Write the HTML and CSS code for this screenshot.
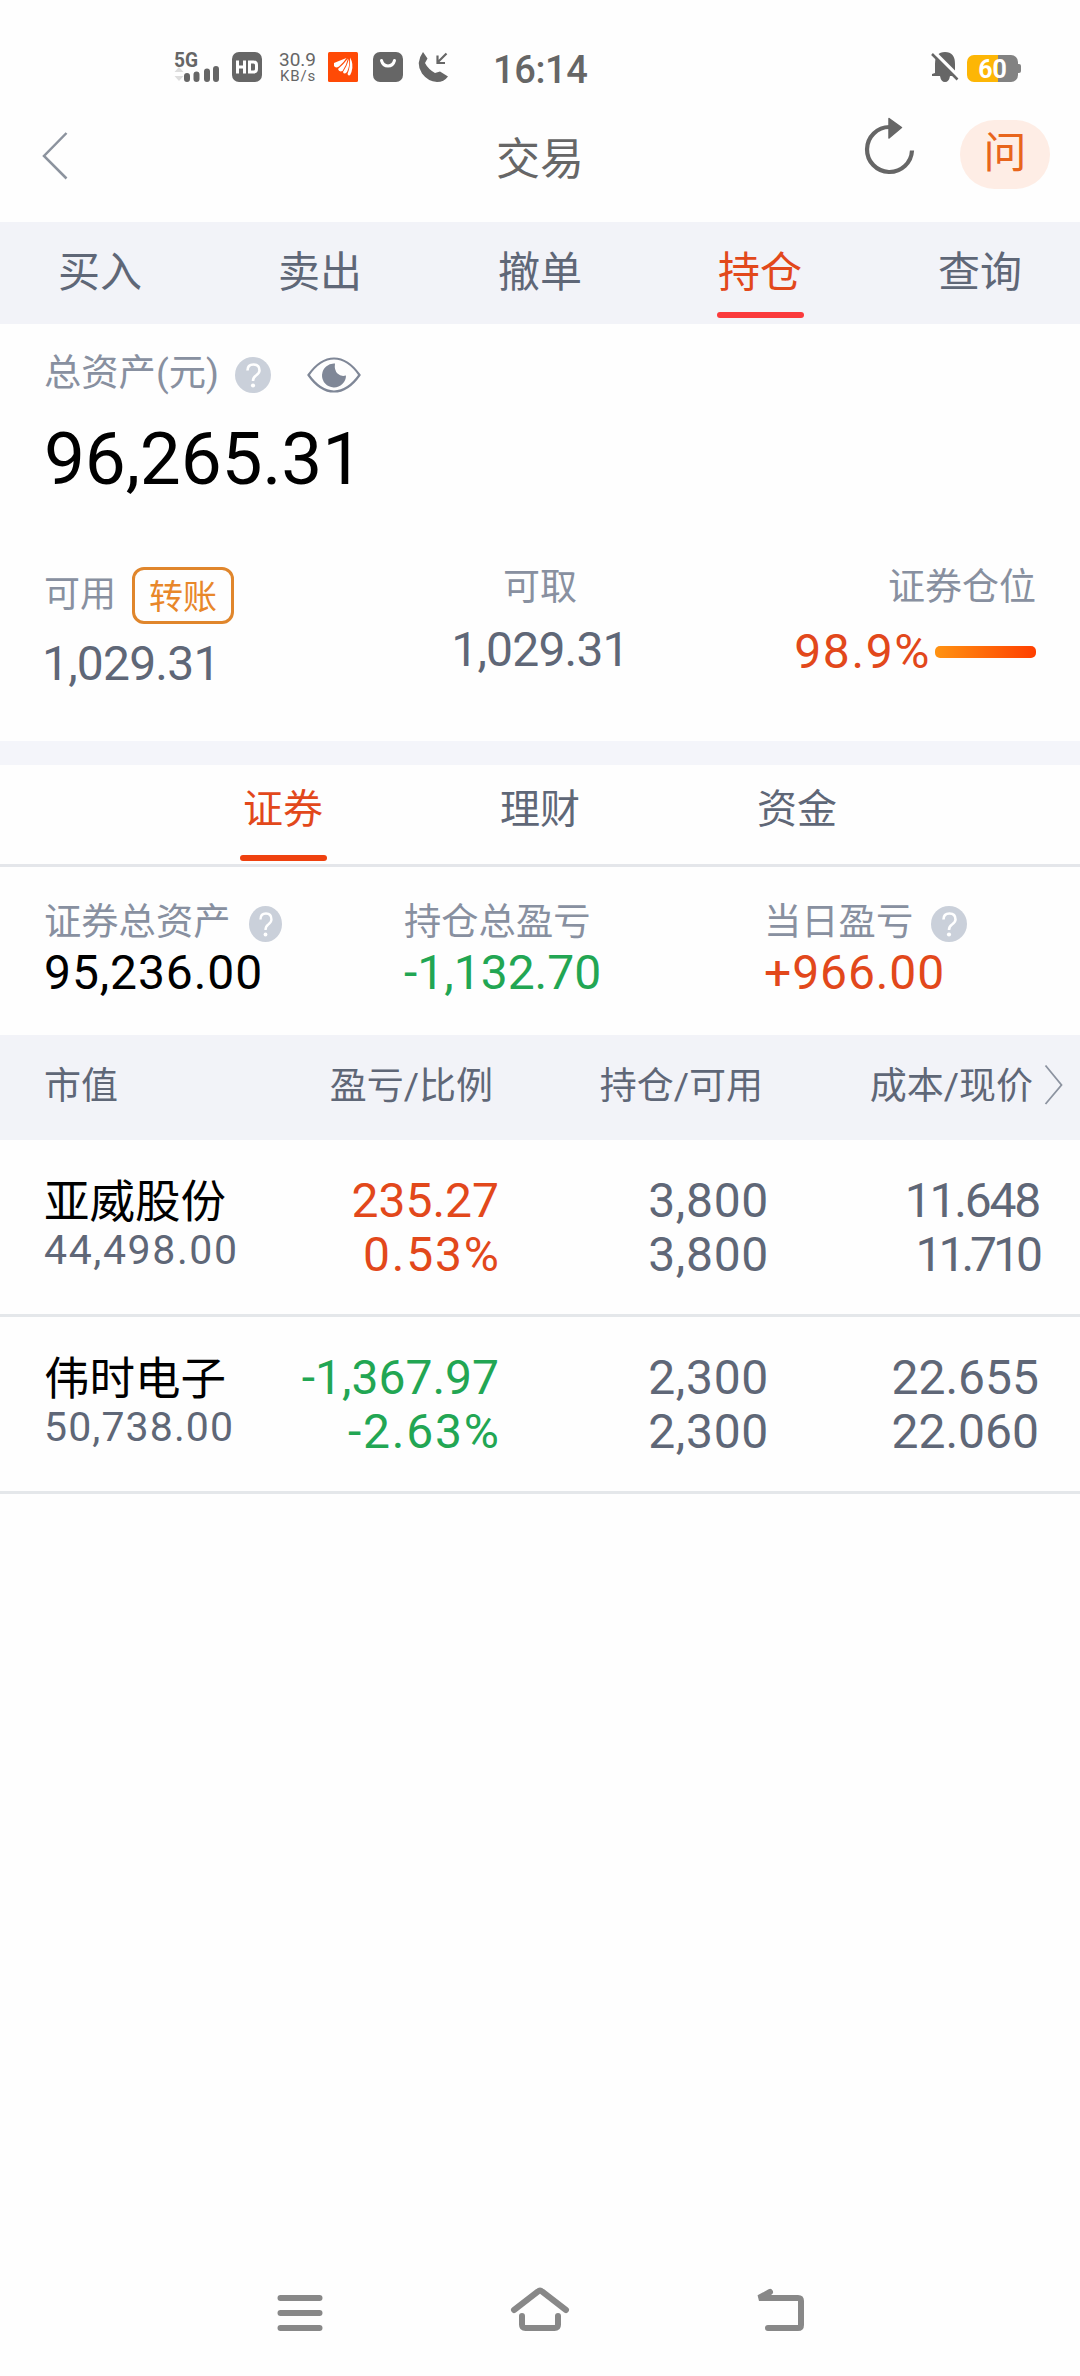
FILE: index.html
```html
<!DOCTYPE html>
<html lang="zh-CN">
<head>
    <meta charset="UTF-8">
    <meta name="viewport" content="width=device-width, initial-scale=1.0">
    <title>交易</title>
    <link rel="stylesheet" href="styles.css">
</head>
<body>
    <div class="status">
        <svg class="signal" width="46" height="32" viewBox="0 0 46 32">
            <text x="0" y="15.500" class="g5" textLength="24" lengthAdjust="spacingAndGlyphs">5G</text>
            <path d="M5 16l4.500 5h-9zM5 30l4.500-5h-9z" fill="#ddd"/>
            <path d="M13 25v3M22.500 23.500v4.500M33 20.500v7.500M42 18v10" stroke="#666" stroke-width="6" stroke-linecap="round"/>
        </svg>
        <svg class="hd" width="30" height="30" viewBox="0 0 30 30">
            <rect width="30" height="30" rx="7" fill="#666"/>
            <path d="M5.500 8.500v13M12.500 8.500v13M5.500 15h7M17.500 10h4q3 0 3 3v4q0 3-3 3h-4z" fill="none" stroke="#fff" stroke-width="3"/>
        </svg>
        <div class="speed"><span>30.9</span><span class="kb">KB/s</span></div>
        <svg class="app" width="30" height="30" viewBox="0 0 30 30">
            <rect width="30" height="30" rx="1.500" fill="#ff4a06"/>
            <path d="M6 11Q12 8.500 18.500 6Q16 10 11 14.500Q7.500 16.500 6 14zM10 17Q15 13 20 6.500Q18.500 13 14.500 19Q11 20.500 10 17zM15 20Q19 14 21 7Q22 14 19 20Q16 23 15 20zM19.500 22Q22.500 15 22 5.500Q26 12 23.500 20Q21.500 26 19.500 22z" fill="#fff"/>
        </svg>
        <svg class="bag" width="30" height="30" viewBox="0 0 30 30">
            <rect width="30" height="30" rx="7" fill="#666"/>
            <path d="M8.500 8.500Q10 14 15 14T21.500 8.500" fill="none" stroke="#fff" stroke-width="3" stroke-linecap="round"/>
        </svg>
        <svg class="call" width="30" height="30" viewBox="0 0 30 30">
            <path d="M5 0L9.500 6.500 7 11Q10 17 17 21L22 19.500 30 24.500Q26 30 19 30Q10 29.500 4 21.500Q-3 11 5 0z" fill="#666"/>
            <path d="M28.500 1.500L19.500 10.500M19.500 3.500v7.500H27" fill="none" stroke="#666" stroke-width="2.200"/>
        </svg>
        <div class="time">16:14</div>
        <svg class="bell" width="28" height="30" viewBox="0 0 28 30">
            <path d="M4 21V12Q4 0 14 0T24 12V21L25.500 24H19Q18 30 14 30T9 24H1V22z" fill="#666"/>
            <path d="M2 -1L28 25" stroke="#fff" stroke-width="3.500"/>
            <path d="M1 2L26.500 27.500" stroke="#666" stroke-width="2.500"/>
        </svg>
        <div class="battery">
            <div class="level">60</div>
        </div>
    </div>

    <div class="header">
        <svg class="back" width="28" height="48" viewBox="0 0 28 48">
            <path d="M25.500 1L3 24L25.500 46.500" fill="none" stroke="#8c939e" stroke-width="2.500"/>
        </svg>
        <div class="title">交易</div>
        <div class="actions">
            <svg class="refresh" width="52" height="60" viewBox="0 0 52 60">
                <path d="M48 33.500A22.500 22.500 0 1 1 25.500 10" fill="none" stroke="#666" stroke-width="4.200"/>
                <path d="M25 1.500L37.500 10.500 25 21z" fill="#666" stroke="#666" stroke-width="1.500" stroke-linejoin="round"/>
            </svg>
            <div class="ask">问</div>
        </div>
    </div>

    <div class="menu">
        <div>买入</div>
        <div>卖出</div>
        <div>撤单</div>
        <div class="ativo">持仓</div>
        <div>查询</div>
    </div>

    <div class="assets">
        <div class="label">
            总资产(元)
            <svg class="help" width="36" height="36" viewBox="0 0 36 36">
                <circle cx="18" cy="18" r="18" fill="#cad0da"/>
                <path d="M12.500 13.500Q12.500 7.500 18.500 7.500T24.500 13.500Q24.500 16 21 18.500Q18 20.500 18 24" fill="none" stroke="#fff" stroke-width="2.600"/>
                <circle cx="18" cy="28.500" r="2.100" fill="#fff"/>
            </svg>
            <svg class="eye" width="54" height="36" viewBox="0 0 54 36">
                <path d="M1.500 18C17 -4 37 -4 52.500 18C37 40 17 40 1.500 18z" fill="none" stroke="#7f8797" stroke-width="2.200"/>
                <path d="M28 6.500A12 12 0 1 0 39 18.500Q34 20 30.500 16.500T28 6.500z" fill="#7f8797"/>
            </svg>
        </div>
        <div class="total">96,265.31</div>
        <div class="cols">
            <div class="esq">
                <div class="avail">可用 <span class="transfer">转账</span></div>
                <div class="num">1,029.31</div>
            </div>
            <div class="meio">
                <div class="lab">可取</div>
                <div class="num">1,029.31</div>
            </div>
            <div class="dir">
                <div class="lab">证券仓位</div>
                <div class="ratio">98.9%<div class="bar"></div></div>
            </div>
        </div>
    </div>

    <div class="subtabs">
        <div class="ativo">证券</div>
        <div>理财</div>
        <div>资金</div>
    </div>

    <div class="summary">
        <div>
            <div class="label">
                证券总资产
                <svg class="help narrow" width="33" height="36" viewBox="0 0 36 36" preserveAspectRatio="none">
                    <circle cx="18" cy="18" r="18" fill="#cad0da"/>
                    <path d="M12.500 13.500Q12.500 7.500 18.500 7.500T24.500 13.500Q24.500 16 21 18.500Q18 20.500 18 24" fill="none" stroke="#fff" stroke-width="2.600"/>
                    <circle cx="18" cy="28.500" r="2.100" fill="#fff"/>
                </svg>
            </div>
            <div class="val">95,236.00</div>
        </div>
        <div>
            <div class="label">持仓总盈亏</div>
            <div class="val green">-1,132.70</div>
        </div>
        <div>
            <div class="label">
                当日盈亏
                <svg class="help" width="36" height="36" viewBox="0 0 36 36">
                    <circle cx="18" cy="18" r="18" fill="#cad0da"/>
                    <path d="M12.500 13.500Q12.500 7.500 18.500 7.500T24.500 13.500Q24.500 16 21 18.500Q18 20.500 18 24" fill="none" stroke="#fff" stroke-width="2.600"/>
                    <circle cx="18" cy="28.500" r="2.100" fill="#fff"/>
                </svg>
            </div>
            <div class="val red">+966.00</div>
        </div>
    </div>

    <div class="thead">
        <div>市值</div>
        <div>盈亏/比例</div>
        <div>持仓/可用</div>
        <div>成本/现价</div>
        <svg width="20" height="42" viewBox="0 0 20 42">
            <path d="M1.500 1.500L17.500 21L1.500 40" fill="none" stroke="#8c93a0" stroke-width="1.800"/>
        </svg>
    </div>
    <div class="row">
        <div>
            <div class="name">亚威股份</div>
            <div class="market">44,498.00</div>
        </div>
        <div class="red">235.27<br><span class="pct">0.53%</span></div>
        <div class="qty">3,800<br>3,800</div>
        <div class="tight">11.648<br><span class="tighter">11.710</span></div>
    </div>
    <div class="row">
        <div>
            <div class="name">伟时电子</div>
            <div class="market second">50,738.00</div>
        </div>
        <div class="green">-1,367.97<br><span class="pct">-2.63%</span></div>
        <div class="qty">2,300<br>2,300</div>
        <div>22.655<br>22.060</div>
    </div>

    <div class="bottom">
        <svg width="60" height="60" viewBox="0 0 60 60">
            <path d="M10.500 18h39M10.500 33h39M10.500 48h39"/>
        </svg>
        <svg width="60" height="60" viewBox="0 0 60 60">
            <path d="M4 30L28 11.500Q30 9.500 32 11.500L56 30M12 36v8.500Q12 48 15.500 48h29Q48 48 48 44.500V36"/>
        </svg>
        <svg width="60" height="60" viewBox="0 0 60 60">
            <path d="M20 12L9 18H48Q51 18 51 21V45Q51 48 48 48H18"/>
        </svg>
    </div>
</body>
</html>
```
FILE: styles.css
```css
*{
    box-sizing: border-box;
}

body{
    margin: 0;
    width: 1080px;
    height: 2376px;
    display: flex;
    flex-direction: column;
    background-color: #fefefe;
    color: #5f6777;
    font-family: Roboto, 'Noto Sans CJK SC', sans-serif;
}

svg{
    display: block;
    flex: none;
    overflow: visible;
}

.red{
    color: #e2481b;
}

.green{
    color: #22a653;
}

/* barra de status */
.status{
    display: flex;
    align-items: center;
    height: 44px;
    margin-top: 45px;
    padding-left: 174px;
    color: #666;
}

.g5{
    font-size: 20px;
    font-weight: 700;
    fill: #666;
}

.hd{
    margin-left: 12px;
}

.speed{
    width: 40px;
    margin-left: 14px;
    font-size: 19px;
    line-height: 19px;
    text-align: right;
}

.speed span{
    display: block;
}

.speed .kb{
    font-size: 15px;
    line-height: 15px;
    letter-spacing: 0.8px;
}

.app{
    margin-left: 12px;
}

.bag, .call{
    margin-left: 15px;
}

.time{
    width: 96px;
    margin: 5px 0 0 45px;
    font-size: 38px;
    font-weight: 500;
    line-height: 40px;
    letter-spacing: -0.4px;
}

.bell{
    margin-left: 342px;
}

.battery{
    position: relative;
    width: 51px;
    height: 27px;
    margin: 3px 0 0 8px;
    border-radius: 7px;
    background: linear-gradient(to right, #fdb605 31px, #828282 31px);
}

.battery::after{
    content: '';
    position: absolute;
    right: -3px;
    top: 9px;
    width: 3px;
    height: 9px;
    border-radius: 0 2px 2px 0;
    background-color: #828282;
}

.level{
    color: white;
    font-size: 25px;
    font-weight: 700;
    line-height: 29px;
    text-align: center;
}

/* topo */
.header{
    display: grid;
    grid-template-columns: 1fr auto 1fr;
    height: 133px;
    padding: 0 30px 0 41px;
}

.back{
    margin-top: 43px;
}

.title{
    margin: 41px 0 0 -11px;
    font-size: 44px;
    line-height: 60px;
    color: #666;
}

.actions{
    display: flex;
    justify-content: flex-end;
}

.refresh{
    margin: 28px 44px 0 0;
}

.ask{
    width: 90px;
    height: 69px;
    margin-top: 31px;
    border-radius: 35px;
    background-color: #feede5;
    color: #e8651c;
    font-size: 43px;
    line-height: 67px;
    text-align: center;
}

.menu{
    display: flex;
    justify-content: space-between;
    height: 102px;
    padding: 0 58px;
    background-color: #f2f3f8;
    font-size: 42px;
    line-height: 101px;
}

.menu .ativo{
    position: relative;
    color: #e2481b;
}

.menu .ativo::after{
    content: '';
    position: absolute;
    left: -1px;
    bottom: 6px;
    width: 87px;
    height: 6px;
    border-radius: 3px;
    background-color: #fb3a3c;
}

/* patrimonio */
.assets{
    height: 417px;
    padding: 24px 44px 0;
}

.label{
    display: flex;
    align-items: center;
    height: 50px;
    font-size: 37.300px;
    line-height: 50px;
    color: #8890a0;
}

.help{
    margin: 4px 0 0 16px;
}

.eye{
    margin: 3px 0 0 36px;
}

.total{
    margin-top: 21px;
    font-size: 73px;
    line-height: 80px;
    letter-spacing: -0.200px;
    color: black;
}

.cols{
    display: grid;
    grid-template-columns: 1fr 1fr 1fr;
    margin-top: 60px;
}

.avail{
    display: flex;
    align-items: center;
    height: 72px;
    font-size: 36px;
    line-height: 72px;
    color: #8890a0;
}

.transfer{
    width: 102px;
    height: 57px;
    margin-left: 16px;
    border: 3px solid #e0862c;
    border-radius: 12px;
    color: #e8872a;
    font-size: 34px;
    line-height: 54px;
    text-align: center;
}

.num, .ratio{
    font-size: 48px;
    line-height: 60px;
}

.num{
    letter-spacing: -0.800px;
}

.lab{
    margin-top: 2px;
    font-size: 37px;
    line-height: 54px;
    color: #8890a0;
}

.esq .num{
    margin: 3px 0 0 -2px;
}

.meio{
    text-align: center;
}

.meio .num{
    margin-top: 5px;
}

.dir{
    text-align: right;
}

.ratio{
    display: flex;
    align-items: center;
    justify-content: flex-end;
    margin-top: 7px;
    letter-spacing: 1.600px;
    color: #e2481b;
}

.bar{
    width: 101px;
    height: 12px;
    margin-left: 4px;
    border-radius: 5px;
    background: linear-gradient(to right, #ff9312, #ff3f00);
}

.subtabs{
    display: flex;
    justify-content: center;
    height: 126px;
    border-top: 24px solid #f4f5fa;
    border-bottom: 3px solid #e4e6ea;
    font-size: 40px;
    line-height: 90px;
    text-align: center;
}

.subtabs div{
    position: relative;
    width: 257px;
}

.subtabs .ativo{
    color: #e2481b;
}

.subtabs .ativo::after{
    content: '';
    position: absolute;
    left: 85px;
    bottom: 3px;
    width: 87px;
    height: 6px;
    border-radius: 3px;
    background-color: #ef410f;
}

.summary{
    display: grid;
    grid-template-columns: 1fr 1fr 1fr;
    height: 168px;
    padding-top: 30px;
}

.summary > div{
    padding-left: 44px;
}

.summary .help{
    margin-left: 18px;
}

.summary .narrow{
    margin-left: 19px;
}

.val{
    font-size: 48px;
    line-height: 52px;
    letter-spacing: 0.900px;
}

.val.green{
    letter-spacing: 0;
}

.summary > div:first-child .val{
    color: black;
}

/* tabela */
.thead, .row{
    display: grid;
    grid-template-columns: 455px 270px 270px 41px;
    padding-left: 44px;
    text-align: right;
}

.thead{
    height: 105px;
    background-color: #f2f3f8;
    font-size: 37px;
    line-height: 103px;
}

.thead div{
    padding-right: 6px;
}

.thead svg{
    margin: 29px 0 0 5px;
}

.thead div:first-child, .row > div:first-child{
    grid-column: 1;
    grid-row: 1;
    text-align: left;
}

.thead div:nth-child(2), .row > div:nth-child(2){
    grid-column: 1;
    grid-row: 1;
}

.row{
    height: 177px;
    padding-top: 34px;
    border-bottom: 3px solid #e4e7ea;
    font-size: 48px;
    line-height: 54px;
}

.name{
    font-size: 45.500px;
    line-height: 58px;
    color: black;
}

.market{
    font-size: 41px;
    line-height: 37px;
    letter-spacing: 1.600px;
}

.market.second{
    letter-spacing: 1.100px;
}

.pct{
    letter-spacing: 1.800px;
    margin-right: -1.800px;
}

.qty{
    letter-spacing: 0.700px;
}

.tight{
    letter-spacing: -2.200px;
}

.tighter{
    letter-spacing: -4px;
}

/* botoes do sistema */
.bottom{
    display: flex;
    justify-content: center;
    gap: 180px;
    margin-top: auto;
    padding-bottom: 36px;
}

.bottom path{
    fill: none;
    stroke: #888;
    stroke-width: 6;
    stroke-linecap: round;
}
```
